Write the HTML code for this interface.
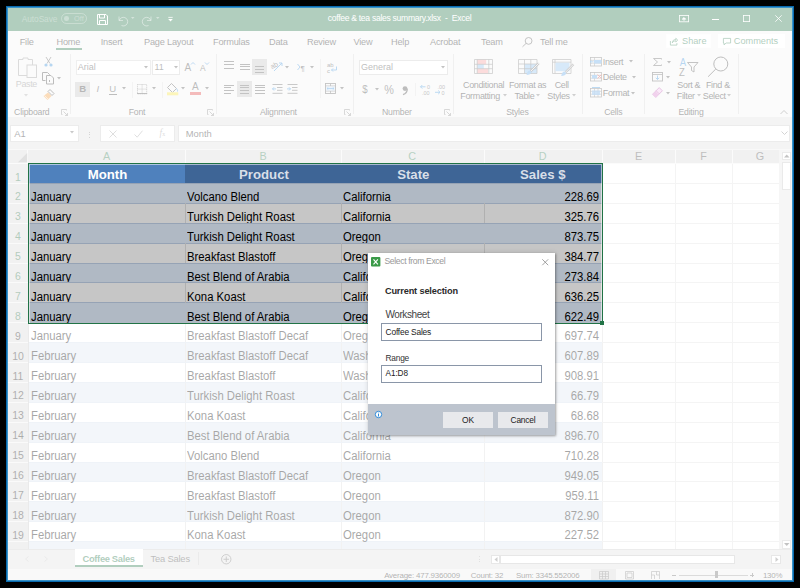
<!DOCTYPE html>
<html><head><meta charset="utf-8">
<style>
*{margin:0;padding:0;box-sizing:border-box}
html,body{width:800px;height:588px;overflow:hidden;background:#000}
body{position:relative;font-family:"Liberation Sans",sans-serif}
.a{position:absolute}
.t{position:absolute;white-space:nowrap;line-height:1}
svg{overflow:visible}
</style></head><body>

<div class="a" style="left:6px;top:6px;width:788px;height:576px;border:1px solid #0a6aae;box-shadow:inset 0 0 0 1px #3a93c8"></div>
<div class="a" style="left:8px;top:8px;width:784px;height:22.6px;background:#217346;"></div>
<div class="t" style="left:21.8px;top:14.99px;font-size:8.4px;color:rgba(255,255,255,.35);font-weight:400;letter-spacing:-0.1px">AutoSave</div>
<div class="a" style="left:60.8px;top:13px;width:26.2px;height:10.7px;border:1px solid rgba(255,255,255,.3);border-radius:6px"></div>
<div class="a" style="left:64px;top:16.3px;width:4.6px;height:4.6px;border-radius:50%;background:rgba(255,255,255,.35)"></div>
<div class="t" style="left:74px;top:15.34px;font-size:7.4px;color:rgba(255,255,255,.35);font-weight:400;">Off</div>
<svg class="a" style="left:97px;top:14px;" width="11" height="11" viewBox="0 0 11 11"><path d="M.5 .5h8.5l1.5 1.5v8.5h-10z M2.5 .5v3.5h5v-3.5 M2.5 10.5v-4h6v4" fill="none" stroke="#fff" stroke-width="1"/></svg>
<svg class="a" style="left:117px;top:14.5px;" width="11" height="11" viewBox="0 0 11 11"><path d="M2 1.5v4h4 M2.3 5.3a4.3 4.3 0 1 1 2.2 5.2" fill="none" stroke="rgba(255,255,255,.45)" stroke-width="1"/></svg>
<svg class="a" style="left:131px;top:17px;" width="4" height="3" viewBox="0 0 4 3"><path d="M0 0h3.5l-1.75 2z" fill="rgba(255,255,255,.45)"/></svg>
<svg class="a" style="left:142px;top:14.5px;" width="11" height="11" viewBox="0 0 11 11"><path d="M9 1.5v4h-4 M8.7 5.3a4.3 4.3 0 1 0 -2.2 5.2" fill="none" stroke="rgba(255,255,255,.45)" stroke-width="1"/></svg>
<svg class="a" style="left:156px;top:17px;" width="4" height="3" viewBox="0 0 4 3"><path d="M0 0h3.5l-1.75 2z" fill="rgba(255,255,255,.45)"/></svg>
<svg class="a" style="left:167.8px;top:17px;" width="5" height="5" viewBox="0 0 5 5"><path d="M.3 .4h4.4" stroke="#fff" stroke-width=".8"/><path d="M.2 2h4.6l-2.3 2.5z" fill="#fff"/></svg>
<div class="t" style="left:269.50px;top:14.32px;width:260px;text-align:center;font-size:8.6px;color:#fff;font-weight:400;letter-spacing:-0.3px">coffee &amp; tea sales summary.xlsx &nbsp;- &nbsp;Excel</div>
<svg class="a" style="left:678.5px;top:15.2px;" width="10" height="7" viewBox="0 0 10 7"><rect x=".4" y=".4" width="9.2" height="6.4" fill="none" stroke="#fff" stroke-width=".8"/><path d="M3.2 4.2l1.8-1.8 1.8 1.8z M5 3.5v2.5" fill="#fff" stroke="#fff" stroke-width=".7"/></svg>
<div class="a" style="left:711.5px;top:18.5px;width:7px;height:0.8px;background:#fff;"></div>
<svg class="a" style="left:743px;top:15.3px;" width="7" height="7" viewBox="0 0 7 7"><rect x=".4" y=".4" width="6.2" height="6.2" fill="none" stroke="#fff" stroke-width=".8"/></svg>
<svg class="a" style="left:774.8px;top:15.3px;" width="7" height="7" viewBox="0 0 7 7"><path d="M.3 .3l6.4 6.4 M6.7 .3l-6.4 6.4" stroke="#fff" stroke-width=".8"/></svg>
<div class="a" style="left:8px;top:30.6px;width:784px;height:86.6px;background:#f3f3f3;"></div>
<div class="t" style="left:19.7px;top:37.81px;font-size:9.2px;color:#1a1a1a;font-weight:400;letter-spacing:-0.2px">File</div>
<div class="t" style="left:56.5px;top:37.81px;font-size:9.2px;color:#1a1a1a;font-weight:400;letter-spacing:-0.2px">Home</div>
<div class="t" style="left:100.7px;top:37.81px;font-size:9.2px;color:#1a1a1a;font-weight:400;letter-spacing:-0.2px">Insert</div>
<div class="t" style="left:144px;top:37.81px;font-size:9.2px;color:#1a1a1a;font-weight:400;letter-spacing:-0.2px">Page Layout</div>
<div class="t" style="left:213px;top:37.81px;font-size:9.2px;color:#1a1a1a;font-weight:400;letter-spacing:-0.2px">Formulas</div>
<div class="t" style="left:269px;top:37.81px;font-size:9.2px;color:#1a1a1a;font-weight:400;letter-spacing:-0.2px">Data</div>
<div class="t" style="left:307px;top:37.81px;font-size:9.2px;color:#1a1a1a;font-weight:400;letter-spacing:-0.2px">Review</div>
<div class="t" style="left:353.5px;top:37.81px;font-size:9.2px;color:#1a1a1a;font-weight:400;letter-spacing:-0.2px">View</div>
<div class="t" style="left:391px;top:37.81px;font-size:9.2px;color:#1a1a1a;font-weight:400;letter-spacing:-0.2px">Help</div>
<div class="t" style="left:430px;top:37.81px;font-size:9.2px;color:#1a1a1a;font-weight:400;letter-spacing:-0.2px">Acrobat</div>
<div class="t" style="left:481px;top:37.81px;font-size:9.2px;color:#1a1a1a;font-weight:400;letter-spacing:-0.2px">Team</div>
<div class="a" style="left:56.2px;top:48.3px;width:26px;height:2px;background:#217346;"></div>
<svg class="a" style="left:521.8px;top:36.5px;" width="10.5" height="10" viewBox="0 0 10.5 10"><circle cx="6.6" cy="3.9" r="3.4" fill="none" stroke="#444" stroke-width=".9"/><path d="M4.2 6.3l-3.7 3.5" stroke="#444" stroke-width=".9"/></svg>
<div class="t" style="left:540px;top:37.81px;font-size:9.2px;color:#1a1a1a;font-weight:400;letter-spacing:-0.2px">Tell me</div>
<div class="a" style="left:666px;top:33.8px;width:45px;height:14.3px;background:#fff;border:1px solid #fbfbfb"></div>
<svg class="a" style="left:670px;top:38px;" width="8" height="7.5" viewBox="0 0 8 7.5"><path d="M.4 3v4.1h6.5v-2 M2.3 4.8c0-2.2 1.6-3.3 3.5-3.3v-1.2l1.9 1.8-1.9 1.8v-1.1c-1.5 0-2.7.7-3.5 2z" fill="none" stroke="#217346" stroke-width=".8"/></svg>
<div class="t" style="left:682px;top:37.01px;font-size:9.2px;color:#217346;font-weight:400;">Share</div>
<div class="a" style="left:717.8px;top:33.8px;width:67.2px;height:14.3px;background:#fff;"></div>
<svg class="a" style="left:723px;top:37.5px;" width="8" height="7" viewBox="0 0 8 7"><path d="M.4 .4h7.2v4.6h-4.4l-2.2 1.8v-1.8h-.6z" fill="none" stroke="#217346" stroke-width=".8"/></svg>
<div class="t" style="left:733.8px;top:37.01px;font-size:9.2px;color:#217346;font-weight:400;">Comments</div>
<div class="a" style="left:69.5px;top:54px;width:1px;height:60px;background:#d4d4d4;"></div>
<div class="a" style="left:216.3px;top:54px;width:1px;height:60px;background:#d4d4d4;"></div>
<div class="a" style="left:352.5px;top:54px;width:1px;height:60px;background:#d4d4d4;"></div>
<div class="a" style="left:453.2px;top:54px;width:1px;height:60px;background:#d4d4d4;"></div>
<div class="a" style="left:581.7px;top:54px;width:1px;height:60px;background:#d4d4d4;"></div>
<div class="a" style="left:644.4px;top:54px;width:1px;height:60px;background:#d4d4d4;"></div>
<div class="a" style="left:738.3px;top:54.4px;width:1px;height:59.6px;background:#d4d4d4;"></div>
<div class="t" style="left:-8.20px;top:108.14px;width:80px;text-align:center;font-size:8.7px;color:#1a1a1a;font-weight:400;letter-spacing:-0.2px">Clipboard</div>
<div class="t" style="left:97.00px;top:108.14px;width:80px;text-align:center;font-size:8.7px;color:#1a1a1a;font-weight:400;letter-spacing:-0.2px">Font</div>
<div class="t" style="left:238.40px;top:108.14px;width:80px;text-align:center;font-size:8.7px;color:#1a1a1a;font-weight:400;letter-spacing:-0.2px">Alignment</div>
<div class="t" style="left:356.90px;top:108.14px;width:80px;text-align:center;font-size:8.7px;color:#1a1a1a;font-weight:400;letter-spacing:-0.2px">Number</div>
<div class="t" style="left:477.40px;top:108.14px;width:80px;text-align:center;font-size:8.7px;color:#1a1a1a;font-weight:400;letter-spacing:-0.2px">Styles</div>
<div class="t" style="left:573.30px;top:108.14px;width:80px;text-align:center;font-size:8.7px;color:#1a1a1a;font-weight:400;letter-spacing:-0.2px">Cells</div>
<div class="t" style="left:651.00px;top:108.14px;width:80px;text-align:center;font-size:8.7px;color:#1a1a1a;font-weight:400;letter-spacing:-0.2px">Editing</div>
<svg class="a" style="left:61px;top:109px;" width="7" height="7" viewBox="0 0 7 7"><path d="M.5 .5h5v1 M.5 .5v5h1 M2.5 2.5l4 4 M6.5 4v2.5h-2.5" fill="none" stroke="#777" stroke-width=".8"/></svg>
<svg class="a" style="left:206.8px;top:109px;" width="7" height="7" viewBox="0 0 7 7"><path d="M.5 .5h5v1 M.5 .5v5h1 M2.5 2.5l4 4 M6.5 4v2.5h-2.5" fill="none" stroke="#777" stroke-width=".8"/></svg>
<svg class="a" style="left:343.5px;top:109px;" width="7" height="7" viewBox="0 0 7 7"><path d="M.5 .5h5v1 M.5 .5v5h1 M2.5 2.5l4 4 M6.5 4v2.5h-2.5" fill="none" stroke="#777" stroke-width=".8"/></svg>
<svg class="a" style="left:444px;top:109px;" width="7" height="7" viewBox="0 0 7 7"><path d="M.5 .5h5v1 M.5 .5v5h1 M2.5 2.5l4 4 M6.5 4v2.5h-2.5" fill="none" stroke="#777" stroke-width=".8"/></svg>
<svg class="a" style="left:18px;top:57px;" width="20" height="21" viewBox="0 0 20 21"><path d="M.5 2.5h4.5v-1.5h5v1.5h4.5v16h-14z" fill="none" stroke="#999"/><rect x="9" y="8" width="9.5" height="12.5" fill="#f3f3f3" stroke="#999"/></svg>
<div class="t" style="left:6.40px;top:80.18px;width:40px;text-align:center;font-size:9px;color:#888;font-weight:400;letter-spacing:-0.35px">Paste</div>
<svg class="a" style="left:23.6px;top:94.0px;" width="4" height="3" viewBox="0 0 4 3"><path d="M0 0h4l-2 2.4z" fill="#aaa"/></svg>
<svg class="a" style="left:44px;top:57px;" width="9" height="10" viewBox="0 0 9 10"><path d="M2 0l4 6.5 M7 0l-4 6.5" stroke="#555" stroke-width=".9"/><circle cx="2" cy="8" r="1.6" fill="#2f8ad8"/><circle cx="7" cy="8" r="1.6" fill="#2f8ad8"/></svg>
<svg class="a" style="left:42px;top:72px;" width="12" height="12" viewBox="0 0 12 12"><path d="M.5 .5h5l2 2v3 M.5 .5v8h3" fill="none" stroke="#444"/><path d="M4.5 3.5h4.5l2.5 2.5v6h-7z" fill="#f3f3f3" stroke="#444"/><path d="M7.5 8v2" stroke="#444"/></svg>
<svg class="a" style="left:57.2px;top:77.0px;" width="4" height="3" viewBox="0 0 4 3"><path d="M0 0h4l-2 2.4z" fill="#555"/></svg>
<svg class="a" style="left:42.5px;top:88.5px;" width="12" height="11" viewBox="0 0 12 11"><path d="M7 0.5l4 4-2 2-4-4z" fill="none" stroke="#444"/><path d="M5 3.5l3.5 3.5-4 4-4-4z" fill="#f39c3a"/><path d="M1.5 6.5l3.5 3.5" stroke="#fff" stroke-width=".6"/></svg>
<div class="a" style="left:75.6px;top:59.9px;width:75.4px;height:15px;background:#fff;border:1px solid #d0d0d0"></div>
<div class="t" style="left:77.8px;top:63.18px;font-size:9px;color:#444;font-weight:400;">Arial</div>
<svg class="a" style="left:144px;top:65.8px;" width="4" height="3" viewBox="0 0 4 3"><path d="M0 0h4l-2 2.4z" fill="#555"/></svg>
<div class="a" style="left:152px;top:59.9px;width:28.3px;height:15px;background:#fff;border:1px solid #c8c8c8"></div>
<div class="t" style="left:154.4px;top:63.18px;font-size:9px;color:#444;font-weight:400;">11</div>
<svg class="a" style="left:173.6px;top:65.8px;" width="4" height="3" viewBox="0 0 4 3"><path d="M0 0h4l-2 2.4z" fill="#555"/></svg>
<div class="t" style="left:184.6px;top:62.83px;font-size:10px;color:#444;font-weight:400;">A</div>
<svg class="a" style="left:190.5px;top:61.5px;" width="4" height="3" viewBox="0 0 4 3"><path d="M0 2.5l2-2 2 2" fill="none" stroke="#2f8ad8" stroke-width=".9"/></svg>
<div class="t" style="left:200px;top:64.19px;font-size:8.4px;color:#444;font-weight:400;">A</div>
<svg class="a" style="left:205.3px;top:62px;" width="4" height="3" viewBox="0 0 4 3"><path d="M0 .5l2 2 2-2" fill="none" stroke="#2f8ad8" stroke-width=".9"/></svg>
<div class="a" style="left:75.3px;top:81.5px;width:15px;height:15.5px;background:#c2c2c2;"></div>
<div class="t" style="left:72.80px;top:84.37px;width:20px;text-align:center;font-size:9.6px;color:#333;font-weight:700;">B</div>
<div class="t" style="left:87.80px;top:84.37px;width:20px;text-align:center;font-size:9.6px;color:#444;font-weight:400;font-style:italic">I</div>
<div class="t" style="left:102.60px;top:84.07px;width:20px;text-align:center;font-size:9.6px;color:#444;font-weight:400;">U</div>
<div class="a" style="left:108.6px;top:94px;width:8px;height:0.9px;background:#444;"></div>
<svg class="a" style="left:122.4px;top:87.3px;" width="4" height="3" viewBox="0 0 4 3"><path d="M0 0h4l-2 2.4z" fill="#555"/></svg>
<div class="a" style="left:131.5px;top:82px;width:1px;height:16px;background:#ddd;"></div>
<svg class="a" style="left:137.2px;top:83.5px;" width="10.2" height="10.2" viewBox="0 0 10.2 10.2"><path d="M.5 .5h9.2v9.2h-9.2z M5.1 .5v9.2 M.5 5.1h9.2" fill="none" stroke="#555" stroke-width=".8" stroke-dasharray="1 1"/><path d="M0 9.6h10.2" stroke="#444" stroke-width="1"/></svg>
<svg class="a" style="left:151.9px;top:87.3px;" width="4" height="3" viewBox="0 0 4 3"><path d="M0 0h4l-2 2.4z" fill="#555"/></svg>
<div class="a" style="left:161.5px;top:82px;width:1px;height:16px;background:#ddd;"></div>
<svg class="a" style="left:166.6px;top:82.5px;" width="11.3" height="12.5" viewBox="0 0 11.3 12.5"><path d="M4.5 .5l5 5-4 4-5-5z" fill="none" stroke="#444" stroke-width=".9"/><path d="M9.5 5.5c1 1.5 1.5 2.5 1 3" stroke="#2f8ad8" fill="none"/><rect x="0" y="9.3" width="11.3" height="3" fill="#f5e33a"/></svg>
<svg class="a" style="left:181.1px;top:87.3px;" width="4" height="3" viewBox="0 0 4 3"><path d="M0 0h4l-2 2.4z" fill="#555"/></svg>
<div class="t" style="left:185.40px;top:82.13px;width:20px;text-align:center;font-size:10px;color:#444;font-weight:400;">A</div>
<div class="a" style="left:190px;top:91.8px;width:10.8px;height:3px;background:#e03c3c;"></div>
<svg class="a" style="left:205px;top:87.3px;" width="4" height="3" viewBox="0 0 4 3"><path d="M0 0h4l-2 2.4z" fill="#555"/></svg>
<div class="a" style="left:224.4px;top:61.4px;width:10px;height:0.9px;background:#555;"></div>
<div class="a" style="left:224.4px;top:64.4px;width:10px;height:0.9px;background:#555;"></div>
<div class="a" style="left:224.4px;top:67.6px;width:10px;height:0.9px;background:#555;"></div>
<div class="a" style="left:239.6px;top:63.6px;width:10px;height:0.9px;background:#555;"></div>
<div class="a" style="left:239.6px;top:66.4px;width:10px;height:0.9px;background:#555;"></div>
<div class="a" style="left:239.6px;top:69.2px;width:10px;height:0.9px;background:#555;"></div>
<div class="a" style="left:252.3px;top:59.4px;width:14.8px;height:15.7px;background:#c2c2c2;"></div>
<div class="a" style="left:254.9px;top:66px;width:9.5px;height:0.9px;background:#555;"></div>
<div class="a" style="left:254.9px;top:69px;width:9.5px;height:0.9px;background:#555;"></div>
<div class="a" style="left:254.9px;top:72.2px;width:9.5px;height:0.9px;background:#555;"></div>
<svg class="a" style="left:271px;top:61.3px;" width="12" height="11" viewBox="0 0 12 11"><text x="0" y="7" font-size="7" fill="#444" font-family="Liberation Sans" transform="rotate(-30 3 6)">ab</text><path d="M3 10l8-8 M8 2h3v3" fill="none" stroke="#2f8ad8" stroke-width=".9"/></svg>
<svg class="a" style="left:284.6px;top:65.8px;" width="4" height="3" viewBox="0 0 4 3"><path d="M0 0h4l-2 2.4z" fill="#555"/></svg>
<svg class="a" style="left:296.5px;top:62.5px;" width="10" height="8" viewBox="0 0 10 8"><path d="M.5 1l2.5 3-2.5 3" fill="none" stroke="#2f8ad8" stroke-width=".9"/><text x="3.5" y="7.5" font-size="8" fill="#444" font-family="Liberation Sans">¶</text></svg>
<svg class="a" style="left:310.3px;top:65.8px;" width="4" height="3" viewBox="0 0 4 3"><path d="M0 0h4l-2 2.4z" fill="#555"/></svg>
<div class="a" style="left:320.2px;top:59px;width:1px;height:39.4px;background:#ddd;"></div>
<svg class="a" style="left:326.5px;top:62px;" width="11" height="11" viewBox="0 0 11 11"><text x="0" y="5" font-size="6" fill="#444" font-family="Liberation Sans">ab</text><text x="0" y="10.5" font-size="6" fill="#444" font-family="Liberation Sans">c</text><path d="M9.5 4.5v3.5h-5 M6 6.5l-1.5 1.5 1.5 1.5" fill="none" stroke="#2f8ad8" stroke-width=".9"/></svg>
<div class="a" style="left:224.4px;top:84.6px;width:10px;height:0.9px;background:#555;"></div>
<div class="a" style="left:224.4px;top:87.4px;width:7px;height:0.9px;background:#555;"></div>
<div class="a" style="left:224.4px;top:90.2px;width:10px;height:0.9px;background:#555;"></div>
<div class="a" style="left:224.4px;top:93px;width:7px;height:0.9px;background:#555;"></div>
<div class="a" style="left:237px;top:81.4px;width:14.9px;height:15.8px;background:#c2c2c2;"></div>
<div class="a" style="left:239.6px;top:84.6px;width:9.7px;height:0.9px;background:#555;"></div>
<div class="a" style="left:239.6px;top:87.4px;width:9.7px;height:0.9px;background:#555;"></div>
<div class="a" style="left:239.6px;top:90.2px;width:9.7px;height:0.9px;background:#555;"></div>
<div class="a" style="left:239.6px;top:93px;width:9.7px;height:0.9px;background:#555;"></div>
<div class="a" style="left:254.9px;top:84.6px;width:9.8px;height:0.9px;background:#555;"></div>
<div class="a" style="left:254.9px;top:87.4px;width:6.8px;height:0.9px;background:#555;"></div>
<div class="a" style="left:254.9px;top:90.2px;width:9.8px;height:0.9px;background:#555;"></div>
<div class="a" style="left:254.9px;top:93px;width:6.8px;height:0.9px;background:#555;"></div>
<div class="a" style="left:257.9px;top:87.4px;width:6.8px;height:0.9px;background:#555;"></div>
<div class="a" style="left:257.9px;top:93px;width:6.8px;height:0.9px;background:#555;"></div>
<svg class="a" style="left:271.5px;top:84px;" width="11" height="10" viewBox="0 0 11 10"><path d="M.5 .5h10 M.5 9.3h10 M5 3.5h5.5 M5 6.3h5.5" stroke="#555" stroke-width=".9"/><path d="M4 4.9h-3.5 M2 3.3l-1.5 1.6 1.5 1.6" fill="none" stroke="#2f8ad8" stroke-width=".9"/></svg>
<svg class="a" style="left:286.8px;top:84px;" width="11" height="10" viewBox="0 0 11 10"><path d="M.5 .5h10 M.5 9.3h10 M5 3.5h5.5 M5 6.3h5.5" stroke="#555" stroke-width=".9"/><path d="M0 4.9h3.5 M2 3.3l1.5 1.6-1.5 1.6" fill="none" stroke="#2f8ad8" stroke-width=".9"/></svg>
<svg class="a" style="left:325px;top:83.2px;" width="11" height="11" viewBox="0 0 11 11"><rect x=".5" y=".5" width="10" height="10" fill="none" stroke="#555" stroke-width=".9"/><path d="M.5 3h10 M.5 8h10 M5.5 .5v2.5 M5.5 8v2.5" stroke="#555" stroke-width=".8"/><rect x="1" y="3.5" width="9" height="4" fill="#cfe3f7"/><path d="M2 5.5h7 M3.3 4.3l-1.3 1.2 1.3 1.2 M7.7 4.3l1.3 1.2-1.3 1.2" fill="none" stroke="#2f8ad8" stroke-width=".8"/></svg>
<svg class="a" style="left:340.1px;top:87.3px;" width="4" height="3" viewBox="0 0 4 3"><path d="M0 0h4l-2 2.4z" fill="#555"/></svg>
<div class="a" style="left:358.5px;top:60px;width:89.2px;height:15.1px;background:#fff;border:1px solid #c8c8c8"></div>
<div class="t" style="left:361px;top:63.08px;font-size:9px;color:#444;font-weight:400;">General</div>
<svg class="a" style="left:440.8px;top:65.8px;" width="4" height="3" viewBox="0 0 4 3"><path d="M0 0h4l-2 2.4z" fill="#555"/></svg>
<div class="t" style="left:355.30px;top:84.07px;width:20px;text-align:center;font-size:11.5px;color:#444;font-weight:400;transform:scaleX(.85)">$</div>
<svg class="a" style="left:375px;top:87.8px;" width="4" height="3" viewBox="0 0 4 3"><path d="M0 0h4l-2 2.4z" fill="#555"/></svg>
<div class="t" style="left:379.00px;top:83.64px;width:20px;text-align:center;font-size:12px;color:#444;font-weight:400;transform:scaleX(.9)">%</div>
<svg class="a" style="left:401.6px;top:86px;" width="6" height="9" viewBox="0 0 6 9"><circle cx="3" cy="2.6" r="2.4" fill="#444"/><path d="M5.3 2.8c0 3-1.5 5-4.3 5.8" fill="none" stroke="#444" stroke-width="1.3"/></svg>
<div class="a" style="left:414.6px;top:83px;width:1px;height:13px;background:#ddd;"></div>
<svg class="a" style="left:419.5px;top:83.5px;" width="11" height="11" viewBox="0 0 11 11"><path d="M5.5 2.8h-5 M2.3 1l-1.8 1.8 1.8 1.8" fill="none" stroke="#2f8ad8" stroke-width=".9"/><text x="7" y="5" font-size="5.5" fill="#555" font-family="Liberation Sans">0</text><text x="2" y="10.5" font-size="5.5" fill="#555" font-family="Liberation Sans">.00</text></svg>
<svg class="a" style="left:434.6px;top:83.5px;" width="11" height="11" viewBox="0 0 11 11"><text x="2.5" y="5" font-size="5.5" fill="#555" font-family="Liberation Sans">.00</text><path d="M0 8.3h5 M3.2 6.5l1.8 1.8-1.8 1.8" fill="none" stroke="#2f8ad8" stroke-width=".9"/><text x="6.5" y="10.5" font-size="5.5" fill="#555" font-family="Liberation Sans">0</text></svg>
<svg class="a" style="left:474px;top:59px;" width="19" height="15" viewBox="0 0 19 15"><rect x="3.2" y=".5" width="9" height="4.8" fill="#f59a9a"/><rect x="3.2" y="5.3" width="6.6" height="4.4" fill="#8cc0ee"/><rect x="3.2" y="9.7" width="10.8" height="4.8" fill="#f59a9a"/><path d="M.5 .5h18v14h-18z M.5 5.3h18 M.5 9.7h18 M3.2 .5v14 M14.8 .5v14" fill="none" stroke="#666" stroke-width=".7"/></svg>
<div class="t" style="left:453.60px;top:80.78px;width:60px;text-align:center;font-size:9px;color:#1a1a1a;font-weight:400;letter-spacing:-0.35px">Conditional</div>
<div class="t" style="left:453.30px;top:91.88px;width:60px;text-align:center;font-size:9px;color:#1a1a1a;font-weight:400;letter-spacing:-0.35px">Formatting &nbsp;&nbsp;</div>
<svg class="a" style="left:517.8px;top:59px;" width="22" height="17" viewBox="0 0 22 17"><rect x="6.5" y="5" width="12.5" height="9.5" fill="#8cc0ee"/><path d="M.5 .5h18.5v14h-18.5z M.5 5h18.5 M.5 9.7h18.5 M6.5 .5v14 M12.8 .5v14" fill="none" stroke="#666" stroke-width=".7"/><path d="M20.8 4.2l-8 8" stroke="#666" stroke-width="2.2"/><path d="M20.8 4.2l-8 8" stroke="#f3f3f3" stroke-width=".9"/><path d="M12 11.5c-2 0-3 2-3.5 4.5 2.5 0 5-1 5-3z" fill="#5ea5e8"/></svg>
<div class="t" style="left:497.60px;top:80.78px;width:60px;text-align:center;font-size:9px;color:#1a1a1a;font-weight:400;letter-spacing:-0.35px">Format as</div>
<div class="t" style="left:497.70px;top:91.88px;width:60px;text-align:center;font-size:9px;color:#1a1a1a;font-weight:400;letter-spacing:-0.35px">Table &nbsp;&nbsp;</div>
<svg class="a" style="left:552.2px;top:59px;" width="23" height="18" viewBox="0 0 23 18"><path d="M.5 .5h18.5v14h-18.5z M.5 3.2h18.5 M3 .5v14" fill="none" stroke="#666" stroke-width=".7"/><rect x="3.5" y="3.7" width="14" height="8.5" fill="#8cc0ee"/><path d="M21.5 5.2l-8 8" stroke="#666" stroke-width="2.2"/><path d="M21.5 5.2l-8 8" stroke="#f3f3f3" stroke-width=".9"/><path d="M12.7 12.5c-2 0-3 2-3.5 4.5 2.5 0 5-1 5-3z" fill="#5ea5e8"/></svg>
<div class="t" style="left:531.70px;top:80.78px;width:60px;text-align:center;font-size:9px;color:#1a1a1a;font-weight:400;letter-spacing:-0.35px">Cell</div>
<div class="t" style="left:531.80px;top:91.88px;width:60px;text-align:center;font-size:9px;color:#1a1a1a;font-weight:400;letter-spacing:-0.35px">Styles &nbsp;&nbsp;</div>
<svg class="a" style="left:589.6px;top:56.9px;" width="12" height="9.5" viewBox="0 0 12 9.5"><rect x=".5" y=".5" width="11" height="8.5" fill="none" stroke="#666" stroke-width=".8"/><path d="M.5 3.3h11 M.5 6.2h11 M4.5 .5v8.5" stroke="#666" stroke-width=".6"/><rect x="4" y="3" width="7.5" height="3.5" fill="#5ea5e8"/><path d="M3.5 4.75h-3.5 M1.5 3.3l-1.5 1.45 1.5 1.45" fill="none" stroke="#2f8ad8" stroke-width=".8"/></svg>
<div class="t" style="left:602.8px;top:57.58px;font-size:9px;color:#1a1a1a;font-weight:400;letter-spacing:-0.35px">Insert</div>
<svg class="a" style="left:629px;top:60.3px;" width="4" height="3" viewBox="0 0 4 3"><path d="M0 0h4l-2 2.4z" fill="#555"/></svg>
<svg class="a" style="left:589.6px;top:72px;" width="12" height="9.5" viewBox="0 0 12 9.5"><rect x=".5" y=".5" width="11" height="8.5" fill="none" stroke="#666" stroke-width=".8"/><path d="M.5 3.3h11 M.5 6.2h11 M4.5 .5v8.5" stroke="#666" stroke-width=".6"/><rect x="2" y="3" width="5" height="3.5" fill="#5ea5e8"/><path d="M7.5 2.5l4 4 M11.5 2.5l-4 4" stroke="#e03c3c" stroke-width=".9"/></svg>
<div class="t" style="left:602.8px;top:73.38px;font-size:9px;color:#1a1a1a;font-weight:400;letter-spacing:-0.35px">Delete</div>
<svg class="a" style="left:632px;top:76.0px;" width="4" height="3" viewBox="0 0 4 3"><path d="M0 0h4l-2 2.4z" fill="#555"/></svg>
<svg class="a" style="left:589.6px;top:87px;" width="12" height="10.5" viewBox="0 0 12 10.5"><rect x=".5" y="1.5" width="11" height="8.5" fill="none" stroke="#666" stroke-width=".8"/><path d="M.5 4.3h11 M.5 7.2h11 M4.5 1.5v8.5 M8 1.5v8.5" stroke="#666" stroke-width=".6"/><rect x="2" y="3.5" width="8" height="4.5" fill="#5ea5e8" opacity=".8"/><path d="M2 .5h8" stroke="#2f8ad8" stroke-width=".9"/></svg>
<div class="t" style="left:602.8px;top:88.78px;font-size:9px;color:#1a1a1a;font-weight:400;letter-spacing:-0.35px">Format</div>
<svg class="a" style="left:630.5px;top:91.6px;" width="4" height="3" viewBox="0 0 4 3"><path d="M0 0h4l-2 2.4z" fill="#555"/></svg>
<svg class="a" style="left:653.2px;top:58.1px;" width="9" height="8" viewBox="0 0 9 8"><path d="M8.5 1.5v-1h-8l4 3.5-4 3.5h8v-1" fill="none" stroke="#555" stroke-width=".9"/></svg>
<svg class="a" style="left:667px;top:60.8px;" width="4" height="3" viewBox="0 0 4 3"><path d="M0 0h4l-2 2.4z" fill="#555"/></svg>
<svg class="a" style="left:651.8px;top:72.1px;" width="11" height="9.5" viewBox="0 0 11 9.5"><rect x=".5" y=".5" width="10" height="8.5" fill="none" stroke="#555" stroke-width=".9"/><path d="M.5 2.5h10" stroke="#555" stroke-width=".8"/><path d="M5.5 3.5v4 M3.8 5.8l1.7 1.7 1.7-1.7" fill="none" stroke="#2f8ad8" stroke-width=".9"/></svg>
<svg class="a" style="left:665.6px;top:76.1px;" width="4" height="3" viewBox="0 0 4 3"><path d="M0 0h4l-2 2.4z" fill="#555"/></svg>
<svg class="a" style="left:651.8px;top:87px;" width="11" height="11" viewBox="0 0 11 11"><path d="M7.2 .6l3.2 3.2-6.6 6.6-3.2-3.2z" fill="#f4c4ee" stroke="#b04aa6" stroke-width=".9"/><path d="M4.1 3.7l3.2 3.2" stroke="#b04aa6" stroke-width=".9"/><path d="M.6 7.2l3.2 3.2 2.9-2.9-3.2-3.2z" fill="#d77ccc"/></svg>
<svg class="a" style="left:665.6px;top:91.8px;" width="4" height="3" viewBox="0 0 4 3"><path d="M0 0h4l-2 2.4z" fill="#555"/></svg>
<div class="t" style="left:676.50px;top:56.83px;width:12px;text-align:center;font-size:10.6px;color:#2f8ad8;font-weight:400;transform:scaleX(.9)">A</div>
<div class="t" style="left:676.30px;top:66.63px;width:12px;text-align:center;font-size:10.6px;color:#444;font-weight:400;transform:scaleX(.9)">Z</div>
<svg class="a" style="left:686.8px;top:61.6px;" width="11.5" height="10.5" viewBox="0 0 11.5 10.5"><path d="M.5 .5h10.5l-4 4.5v5l-2.5-1.5v-3.5z" fill="none" stroke="#444" stroke-width=".9"/></svg>
<div class="t" style="left:663.80px;top:80.88px;width:50px;text-align:center;font-size:9px;color:#1a1a1a;font-weight:400;letter-spacing:-0.35px">Sort &amp;</div>
<div class="t" style="left:664.00px;top:91.88px;width:50px;text-align:center;font-size:9px;color:#1a1a1a;font-weight:400;letter-spacing:-0.35px">Filter &nbsp;&nbsp;</div>
<svg class="a" style="left:706.5px;top:56px;" width="22" height="22" viewBox="0 0 22 22"><circle cx="13.8" cy="8" r="7" fill="none" stroke="#444" stroke-width="1"/><path d="M8.8 13l-7.7 7.7" stroke="#444" stroke-width="1"/></svg>
<div class="t" style="left:692.90px;top:80.58px;width:50px;text-align:center;font-size:9px;color:#1a1a1a;font-weight:400;letter-spacing:-0.35px">Find &amp;</div>
<div class="t" style="left:692.50px;top:91.88px;width:50px;text-align:center;font-size:9px;color:#1a1a1a;font-weight:400;letter-spacing:-0.35px">Select &nbsp;&nbsp;</div>
<svg class="a" style="left:779.5px;top:109.5px;" width="8" height="5" viewBox="0 0 8 5"><path d="M.5 4l3.5-3.5 3.5 3.5" fill="none" stroke="#666" stroke-width=".9"/></svg>
<svg class="a" style="left:502.6px;top:94.39999999999999px;" width="4" height="3" viewBox="0 0 4 3"><path d="M0 0h4l-2 2.4z" fill="#777"/></svg>
<svg class="a" style="left:535.6px;top:94.39999999999999px;" width="4" height="3" viewBox="0 0 4 3"><path d="M0 0h4l-2 2.4z" fill="#777"/></svg>
<svg class="a" style="left:571.5px;top:94.39999999999999px;" width="4" height="3" viewBox="0 0 4 3"><path d="M0 0h4l-2 2.4z" fill="#777"/></svg>
<svg class="a" style="left:696.6px;top:94.39999999999999px;" width="4" height="3" viewBox="0 0 4 3"><path d="M0 0h4l-2 2.4z" fill="#777"/></svg>
<svg class="a" style="left:727.4px;top:94.39999999999999px;" width="4" height="3" viewBox="0 0 4 3"><path d="M0 0h4l-2 2.4z" fill="#777"/></svg>
<div class="a" style="left:8px;top:117.2px;width:784px;height:32.5px;background:#e0e0e0;"></div>
<div class="a" style="left:9.65px;top:124.9px;width:69.6px;height:17.6px;background:#fff;border:1px solid #c8c8c8"></div>
<div class="t" style="left:14.2px;top:129.04px;font-size:9.4px;color:#222;font-weight:400;">A1</div>
<svg class="a" style="left:70px;top:131.4px;" width="4" height="3" viewBox="0 0 4 3"><path d="M0 0h4l-2 2.4z" fill="#666"/></svg>
<div class="a" style="left:89.4px;top:131.5px;width:1px;height:1px;background:#888;"></div>
<div class="a" style="left:89.4px;top:134px;width:1px;height:1px;background:#888;"></div>
<div class="a" style="left:89.4px;top:136.5px;width:1px;height:1px;background:#888;"></div>
<div class="a" style="left:100.3px;top:125px;width:74.9px;height:17px;background:#fff;border:1px solid #c8c8c8"></div>
<svg class="a" style="left:109px;top:129.5px;" width="8" height="8" viewBox="0 0 8 8"><path d="M.5 .5l7 7 M7.5 .5l-7 7" stroke="#999" stroke-width=".9"/></svg>
<svg class="a" style="left:133.5px;top:129.5px;" width="9" height="8" viewBox="0 0 9 8"><path d="M.5 4.5l2.7 2.7 5.3-6.5" fill="none" stroke="#999" stroke-width=".9"/></svg>
<div class="t" style="left:152.40px;top:129.04px;width:20px;text-align:center;font-size:9.4px;color:#999;font-weight:400;font-family:\"Liberation Serif\",serif"><i>f</i><span style="font-size:6px">x</span></div>
<div class="a" style="left:177.7px;top:125px;width:612.5px;height:17px;background:#fff;border:1px solid #c8c8c8"></div>
<div class="t" style="left:185.7px;top:129.04px;font-size:9.4px;color:#222;font-weight:400;">Month</div>
<svg class="a" style="left:780.5px;top:131px;" width="7" height="4" viewBox="0 0 7 4"><path d="M.5 .5l3 3 3-3" fill="none" stroke="#777" stroke-width=".9"/></svg>
<div class="a" style="left:8px;top:149px;width:784px;height:15px;background:#d6d6d6;"></div>
<div class="a" style="left:8px;top:148.5px;width:784px;height:1px;background:#eeeeee;"></div>
<div class="a" style="left:8px;top:149.5px;width:20px;height:400px;background:#d6d6d6;"></div>
<div class="a" style="left:779.3px;top:149.5px;width:12.7px;height:400px;background:#e6e6e6;"></div>
<div class="a" style="left:28px;top:164px;width:751.3px;height:385px;background:#fff;"></div>
<div class="a" style="left:28.5px;top:183.45000000000002px;width:573.5px;height:19.9px;background:#dce6f1;"></div>
<div class="a" style="left:28.5px;top:223.25px;width:573.5px;height:19.9px;background:#dce6f1;"></div>
<div class="a" style="left:28.5px;top:263.05px;width:573.5px;height:19.9px;background:#dce6f1;"></div>
<div class="a" style="left:28.5px;top:302.85px;width:573.5px;height:19.9px;background:#dce6f1;"></div>
<div class="a" style="left:28.5px;top:342.65px;width:573.5px;height:19.9px;background:#dce6f1;"></div>
<div class="a" style="left:28.5px;top:382.45px;width:573.5px;height:19.9px;background:#dce6f1;"></div>
<div class="a" style="left:28.5px;top:422.25px;width:573.5px;height:19.9px;background:#dce6f1;"></div>
<div class="a" style="left:28.5px;top:462.05px;width:573.5px;height:19.9px;background:#dce6f1;"></div>
<div class="a" style="left:28.5px;top:501.84999999999997px;width:573.5px;height:19.9px;background:#dce6f1;"></div>
<div class="a" style="left:28.5px;top:541.65px;width:573.5px;height:19.9px;background:#dce6f1;"></div>
<div class="a" style="left:185px;top:149.5px;width:1px;height:14.5px;background:#f4f4f4;"></div>
<div class="a" style="left:185px;top:164px;width:1px;height:385px;background:#dadada;"></div>
<div class="a" style="left:341px;top:149.5px;width:1px;height:14.5px;background:#f4f4f4;"></div>
<div class="a" style="left:341px;top:164px;width:1px;height:385px;background:#dadada;"></div>
<div class="a" style="left:483.5px;top:149.5px;width:1px;height:14.5px;background:#f4f4f4;"></div>
<div class="a" style="left:483.5px;top:164px;width:1px;height:385px;background:#dadada;"></div>
<div class="a" style="left:602px;top:149.5px;width:1px;height:14.5px;background:#f4f4f4;"></div>
<div class="a" style="left:602px;top:164px;width:1px;height:385px;background:#dadada;"></div>
<div class="a" style="left:675px;top:149.5px;width:1px;height:14.5px;background:#f4f4f4;"></div>
<div class="a" style="left:675px;top:164px;width:1px;height:385px;background:#e0e0e0;"></div>
<div class="a" style="left:732px;top:149.5px;width:1px;height:14.5px;background:#f4f4f4;"></div>
<div class="a" style="left:732px;top:164px;width:1px;height:385px;background:#e0e0e0;"></div>
<div class="a" style="left:8px;top:163.05px;width:20px;height:1px;background:#f0f0f0;"></div>
<div class="a" style="left:28px;top:163.05px;width:574px;height:1px;background:#d0dcea;"></div>
<div class="a" style="left:602px;top:163.05px;width:177.3px;height:1px;background:#e0e0e0;"></div>
<div class="a" style="left:8px;top:182.95000000000002px;width:20px;height:1px;background:#f0f0f0;"></div>
<div class="a" style="left:28px;top:182.95000000000002px;width:574px;height:1px;background:#d0dcea;"></div>
<div class="a" style="left:602px;top:182.95000000000002px;width:177.3px;height:1px;background:#e0e0e0;"></div>
<div class="a" style="left:8px;top:202.85000000000002px;width:20px;height:1px;background:#f0f0f0;"></div>
<div class="a" style="left:28px;top:202.85000000000002px;width:574px;height:1px;background:#d0dcea;"></div>
<div class="a" style="left:602px;top:202.85000000000002px;width:177.3px;height:1px;background:#e0e0e0;"></div>
<div class="a" style="left:8px;top:222.75px;width:20px;height:1px;background:#f0f0f0;"></div>
<div class="a" style="left:28px;top:222.75px;width:574px;height:1px;background:#d0dcea;"></div>
<div class="a" style="left:602px;top:222.75px;width:177.3px;height:1px;background:#e0e0e0;"></div>
<div class="a" style="left:8px;top:242.65px;width:20px;height:1px;background:#f0f0f0;"></div>
<div class="a" style="left:28px;top:242.65px;width:574px;height:1px;background:#d0dcea;"></div>
<div class="a" style="left:602px;top:242.65px;width:177.3px;height:1px;background:#e0e0e0;"></div>
<div class="a" style="left:8px;top:262.55px;width:20px;height:1px;background:#f0f0f0;"></div>
<div class="a" style="left:28px;top:262.55px;width:574px;height:1px;background:#d0dcea;"></div>
<div class="a" style="left:602px;top:262.55px;width:177.3px;height:1px;background:#e0e0e0;"></div>
<div class="a" style="left:8px;top:282.45px;width:20px;height:1px;background:#f0f0f0;"></div>
<div class="a" style="left:28px;top:282.45px;width:574px;height:1px;background:#d0dcea;"></div>
<div class="a" style="left:602px;top:282.45px;width:177.3px;height:1px;background:#e0e0e0;"></div>
<div class="a" style="left:8px;top:302.35px;width:20px;height:1px;background:#f0f0f0;"></div>
<div class="a" style="left:28px;top:302.35px;width:574px;height:1px;background:#d0dcea;"></div>
<div class="a" style="left:602px;top:302.35px;width:177.3px;height:1px;background:#e0e0e0;"></div>
<div class="a" style="left:8px;top:322.25px;width:20px;height:1px;background:#f0f0f0;"></div>
<div class="a" style="left:28px;top:322.25px;width:574px;height:1px;background:#d0dcea;"></div>
<div class="a" style="left:602px;top:322.25px;width:177.3px;height:1px;background:#e0e0e0;"></div>
<div class="a" style="left:8px;top:342.15px;width:20px;height:1px;background:#f0f0f0;"></div>
<div class="a" style="left:28px;top:342.15px;width:574px;height:1px;background:#d0dcea;"></div>
<div class="a" style="left:602px;top:342.15px;width:177.3px;height:1px;background:#e0e0e0;"></div>
<div class="a" style="left:8px;top:362.05px;width:20px;height:1px;background:#f0f0f0;"></div>
<div class="a" style="left:28px;top:362.05px;width:574px;height:1px;background:#d0dcea;"></div>
<div class="a" style="left:602px;top:362.05px;width:177.3px;height:1px;background:#e0e0e0;"></div>
<div class="a" style="left:8px;top:381.95px;width:20px;height:1px;background:#f0f0f0;"></div>
<div class="a" style="left:28px;top:381.95px;width:574px;height:1px;background:#d0dcea;"></div>
<div class="a" style="left:602px;top:381.95px;width:177.3px;height:1px;background:#e0e0e0;"></div>
<div class="a" style="left:8px;top:401.85px;width:20px;height:1px;background:#f0f0f0;"></div>
<div class="a" style="left:28px;top:401.85px;width:574px;height:1px;background:#d0dcea;"></div>
<div class="a" style="left:602px;top:401.85px;width:177.3px;height:1px;background:#e0e0e0;"></div>
<div class="a" style="left:8px;top:421.75px;width:20px;height:1px;background:#f0f0f0;"></div>
<div class="a" style="left:28px;top:421.75px;width:574px;height:1px;background:#d0dcea;"></div>
<div class="a" style="left:602px;top:421.75px;width:177.3px;height:1px;background:#e0e0e0;"></div>
<div class="a" style="left:8px;top:441.65px;width:20px;height:1px;background:#f0f0f0;"></div>
<div class="a" style="left:28px;top:441.65px;width:574px;height:1px;background:#d0dcea;"></div>
<div class="a" style="left:602px;top:441.65px;width:177.3px;height:1px;background:#e0e0e0;"></div>
<div class="a" style="left:8px;top:461.55px;width:20px;height:1px;background:#f0f0f0;"></div>
<div class="a" style="left:28px;top:461.55px;width:574px;height:1px;background:#d0dcea;"></div>
<div class="a" style="left:602px;top:461.55px;width:177.3px;height:1px;background:#e0e0e0;"></div>
<div class="a" style="left:8px;top:481.45px;width:20px;height:1px;background:#f0f0f0;"></div>
<div class="a" style="left:28px;top:481.45px;width:574px;height:1px;background:#d0dcea;"></div>
<div class="a" style="left:602px;top:481.45px;width:177.3px;height:1px;background:#e0e0e0;"></div>
<div class="a" style="left:8px;top:501.34999999999997px;width:20px;height:1px;background:#f0f0f0;"></div>
<div class="a" style="left:28px;top:501.34999999999997px;width:574px;height:1px;background:#d0dcea;"></div>
<div class="a" style="left:602px;top:501.34999999999997px;width:177.3px;height:1px;background:#e0e0e0;"></div>
<div class="a" style="left:8px;top:521.25px;width:20px;height:1px;background:#f0f0f0;"></div>
<div class="a" style="left:28px;top:521.25px;width:574px;height:1px;background:#d0dcea;"></div>
<div class="a" style="left:602px;top:521.25px;width:177.3px;height:1px;background:#e0e0e0;"></div>
<div class="a" style="left:8px;top:541.15px;width:20px;height:1px;background:#f0f0f0;"></div>
<div class="a" style="left:28px;top:541.15px;width:574px;height:1px;background:#d0dcea;"></div>
<div class="a" style="left:602px;top:541.15px;width:177.3px;height:1px;background:#e0e0e0;"></div>
<div class="a" style="left:8px;top:561.05px;width:20px;height:1px;background:#f0f0f0;"></div>
<div class="a" style="left:28px;top:561.05px;width:574px;height:1px;background:#d0dcea;"></div>
<div class="a" style="left:602px;top:561.05px;width:177.3px;height:1px;background:#e0e0e0;"></div>
<div class="a" style="left:27.3px;top:149.5px;width:1px;height:14px;background:#f4f4f4;"></div>
<div class="a" style="left:27.5px;top:163.5px;width:1px;height:386px;background:#c4c4c4;"></div>
<div class="a" style="left:8px;top:162.7px;width:771.3px;height:1px;background:#f4f4f4;"></div>
<svg class="a" style="left:17.6px;top:152.6px;" width="9.2" height="9.2" viewBox="0 0 9.2 9.2"><path d="M9.2 0v9.2h-9.2z" fill="#a8a8a8"/></svg>
<div class="t" style="left:86.50px;top:151.46px;width:40px;text-align:center;font-size:10.8px;color:#2f7a50;font-weight:400;">A</div>
<div class="t" style="left:243.00px;top:151.46px;width:40px;text-align:center;font-size:10.8px;color:#2f7a50;font-weight:400;">B</div>
<div class="t" style="left:392.25px;top:151.46px;width:40px;text-align:center;font-size:10.8px;color:#2f7a50;font-weight:400;">C</div>
<div class="t" style="left:522.75px;top:151.46px;width:40px;text-align:center;font-size:10.8px;color:#2f7a50;font-weight:400;">D</div>
<div class="t" style="left:618.50px;top:151.46px;width:40px;text-align:center;font-size:10.8px;color:#444;font-weight:400;">E</div>
<div class="t" style="left:683.50px;top:151.46px;width:40px;text-align:center;font-size:10.8px;color:#444;font-weight:400;">F</div>
<div class="t" style="left:740.00px;top:151.46px;width:40px;text-align:center;font-size:10.8px;color:#444;font-weight:400;">G</div>
<div class="t" style="left:6.00px;top:171.54px;width:24px;text-align:center;font-size:11px;color:#1e6b40;font-weight:400;transform:scaleX(.95)">1</div>
<div class="t" style="left:6.00px;top:191.44px;width:24px;text-align:center;font-size:11px;color:#1e6b40;font-weight:400;transform:scaleX(.95)">2</div>
<div class="t" style="left:6.00px;top:211.34px;width:24px;text-align:center;font-size:11px;color:#1e6b40;font-weight:400;transform:scaleX(.95)">3</div>
<div class="t" style="left:6.00px;top:231.24px;width:24px;text-align:center;font-size:11px;color:#1e6b40;font-weight:400;transform:scaleX(.95)">4</div>
<div class="t" style="left:6.00px;top:251.14px;width:24px;text-align:center;font-size:11px;color:#1e6b40;font-weight:400;transform:scaleX(.95)">5</div>
<div class="t" style="left:6.00px;top:271.04px;width:24px;text-align:center;font-size:11px;color:#1e6b40;font-weight:400;transform:scaleX(.95)">6</div>
<div class="t" style="left:6.00px;top:290.94px;width:24px;text-align:center;font-size:11px;color:#1e6b40;font-weight:400;transform:scaleX(.95)">7</div>
<div class="t" style="left:6.00px;top:310.84px;width:24px;text-align:center;font-size:11px;color:#1e6b40;font-weight:400;transform:scaleX(.95)">8</div>
<div class="t" style="left:6.00px;top:330.74px;width:24px;text-align:center;font-size:11px;color:#111;font-weight:400;transform:scaleX(.95)">9</div>
<div class="t" style="left:6.00px;top:350.64px;width:24px;text-align:center;font-size:11px;color:#111;font-weight:400;transform:scaleX(.95)">10</div>
<div class="t" style="left:6.00px;top:370.54px;width:24px;text-align:center;font-size:11px;color:#111;font-weight:400;transform:scaleX(.95)">11</div>
<div class="t" style="left:6.00px;top:390.44px;width:24px;text-align:center;font-size:11px;color:#111;font-weight:400;transform:scaleX(.95)">12</div>
<div class="t" style="left:6.00px;top:410.34px;width:24px;text-align:center;font-size:11px;color:#111;font-weight:400;transform:scaleX(.95)">13</div>
<div class="t" style="left:6.00px;top:430.24px;width:24px;text-align:center;font-size:11px;color:#111;font-weight:400;transform:scaleX(.95)">14</div>
<div class="t" style="left:6.00px;top:450.14px;width:24px;text-align:center;font-size:11px;color:#111;font-weight:400;transform:scaleX(.95)">15</div>
<div class="t" style="left:6.00px;top:470.04px;width:24px;text-align:center;font-size:11px;color:#111;font-weight:400;transform:scaleX(.95)">16</div>
<div class="t" style="left:6.00px;top:489.94px;width:24px;text-align:center;font-size:11px;color:#111;font-weight:400;transform:scaleX(.95)">17</div>
<div class="t" style="left:6.00px;top:509.84px;width:24px;text-align:center;font-size:11px;color:#111;font-weight:400;transform:scaleX(.95)">18</div>
<div class="t" style="left:6.00px;top:529.74px;width:24px;text-align:center;font-size:11px;color:#111;font-weight:400;transform:scaleX(.95)">19</div>
<div class="t" style="left:31.4px;top:330.44px;font-size:12.3px;color:#000;font-weight:400;transform:scaleX(.92);transform-origin:0 0">January</div>
<div class="t" style="left:187px;top:330.44px;font-size:12.3px;color:#000;font-weight:400;transform:scaleX(.92);transform-origin:0 0">Breakfast Blastoff Decaf</div>
<div class="t" style="left:343px;top:330.44px;font-size:12.3px;color:#000;font-weight:400;transform:scaleX(.92);transform-origin:0 0">Oregon</div>
<div class="t" style="left:299px;top:330.44px;width:300px;text-align:right;font-size:12.3px;color:#000;font-weight:400;transform:scaleX(.92);transform-origin:100% 0">697.74</div>
<div class="t" style="left:31.4px;top:350.34px;font-size:12.3px;color:#000;font-weight:400;transform:scaleX(.92);transform-origin:0 0">February</div>
<div class="t" style="left:187px;top:350.34px;font-size:12.3px;color:#000;font-weight:400;transform:scaleX(.92);transform-origin:0 0">Breakfast Blastoff Decaf</div>
<div class="t" style="left:343px;top:350.34px;font-size:12.3px;color:#000;font-weight:400;transform:scaleX(.92);transform-origin:0 0">Washington</div>
<div class="t" style="left:299px;top:350.34px;width:300px;text-align:right;font-size:12.3px;color:#000;font-weight:400;transform:scaleX(.92);transform-origin:100% 0">607.89</div>
<div class="t" style="left:31.4px;top:370.24px;font-size:12.3px;color:#000;font-weight:400;transform:scaleX(.92);transform-origin:0 0">February</div>
<div class="t" style="left:187px;top:370.24px;font-size:12.3px;color:#000;font-weight:400;transform:scaleX(.92);transform-origin:0 0">Breakfast Blastoff</div>
<div class="t" style="left:343px;top:370.24px;font-size:12.3px;color:#000;font-weight:400;transform:scaleX(.92);transform-origin:0 0">Washington</div>
<div class="t" style="left:299px;top:370.24px;width:300px;text-align:right;font-size:12.3px;color:#000;font-weight:400;transform:scaleX(.92);transform-origin:100% 0">908.91</div>
<div class="t" style="left:31.4px;top:390.14px;font-size:12.3px;color:#000;font-weight:400;transform:scaleX(.92);transform-origin:0 0">February</div>
<div class="t" style="left:187px;top:390.14px;font-size:12.3px;color:#000;font-weight:400;transform:scaleX(.92);transform-origin:0 0">Turkish Delight Roast</div>
<div class="t" style="left:343px;top:390.14px;font-size:12.3px;color:#000;font-weight:400;transform:scaleX(.92);transform-origin:0 0">California</div>
<div class="t" style="left:299px;top:390.14px;width:300px;text-align:right;font-size:12.3px;color:#000;font-weight:400;transform:scaleX(.92);transform-origin:100% 0">66.79</div>
<div class="t" style="left:31.4px;top:410.04px;font-size:12.3px;color:#000;font-weight:400;transform:scaleX(.92);transform-origin:0 0">February</div>
<div class="t" style="left:187px;top:410.04px;font-size:12.3px;color:#000;font-weight:400;transform:scaleX(.92);transform-origin:0 0">Kona Koast</div>
<div class="t" style="left:343px;top:410.04px;font-size:12.3px;color:#000;font-weight:400;transform:scaleX(.92);transform-origin:0 0">California</div>
<div class="t" style="left:299px;top:410.04px;width:300px;text-align:right;font-size:12.3px;color:#000;font-weight:400;transform:scaleX(.92);transform-origin:100% 0">68.68</div>
<div class="t" style="left:31.4px;top:429.94px;font-size:12.3px;color:#000;font-weight:400;transform:scaleX(.92);transform-origin:0 0">February</div>
<div class="t" style="left:187px;top:429.94px;font-size:12.3px;color:#000;font-weight:400;transform:scaleX(.92);transform-origin:0 0">Best Blend of Arabia</div>
<div class="t" style="left:343px;top:429.94px;font-size:12.3px;color:#000;font-weight:400;transform:scaleX(.92);transform-origin:0 0">California</div>
<div class="t" style="left:299px;top:429.94px;width:300px;text-align:right;font-size:12.3px;color:#000;font-weight:400;transform:scaleX(.92);transform-origin:100% 0">896.70</div>
<div class="t" style="left:31.4px;top:449.84px;font-size:12.3px;color:#000;font-weight:400;transform:scaleX(.92);transform-origin:0 0">February</div>
<div class="t" style="left:187px;top:449.84px;font-size:12.3px;color:#000;font-weight:400;transform:scaleX(.92);transform-origin:0 0">Volcano Blend</div>
<div class="t" style="left:343px;top:449.84px;font-size:12.3px;color:#000;font-weight:400;transform:scaleX(.92);transform-origin:0 0">California</div>
<div class="t" style="left:299px;top:449.84px;width:300px;text-align:right;font-size:12.3px;color:#000;font-weight:400;transform:scaleX(.92);transform-origin:100% 0">710.28</div>
<div class="t" style="left:31.4px;top:469.74px;font-size:12.3px;color:#000;font-weight:400;transform:scaleX(.92);transform-origin:0 0">February</div>
<div class="t" style="left:187px;top:469.74px;font-size:12.3px;color:#000;font-weight:400;transform:scaleX(.92);transform-origin:0 0">Breakfast Blastoff Decaf</div>
<div class="t" style="left:343px;top:469.74px;font-size:12.3px;color:#000;font-weight:400;transform:scaleX(.92);transform-origin:0 0">Oregon</div>
<div class="t" style="left:299px;top:469.74px;width:300px;text-align:right;font-size:12.3px;color:#000;font-weight:400;transform:scaleX(.92);transform-origin:100% 0">949.05</div>
<div class="t" style="left:31.4px;top:489.64px;font-size:12.3px;color:#000;font-weight:400;transform:scaleX(.92);transform-origin:0 0">February</div>
<div class="t" style="left:187px;top:489.64px;font-size:12.3px;color:#000;font-weight:400;transform:scaleX(.92);transform-origin:0 0">Breakfast Blastoff</div>
<div class="t" style="left:343px;top:489.64px;font-size:12.3px;color:#000;font-weight:400;transform:scaleX(.92);transform-origin:0 0">Oregon</div>
<div class="t" style="left:299px;top:489.64px;width:300px;text-align:right;font-size:12.3px;color:#000;font-weight:400;transform:scaleX(.92);transform-origin:100% 0">959.11</div>
<div class="t" style="left:31.4px;top:509.54px;font-size:12.3px;color:#000;font-weight:400;transform:scaleX(.92);transform-origin:0 0">February</div>
<div class="t" style="left:187px;top:509.54px;font-size:12.3px;color:#000;font-weight:400;transform:scaleX(.92);transform-origin:0 0">Turkish Delight Roast</div>
<div class="t" style="left:343px;top:509.54px;font-size:12.3px;color:#000;font-weight:400;transform:scaleX(.92);transform-origin:0 0">Oregon</div>
<div class="t" style="left:299px;top:509.54px;width:300px;text-align:right;font-size:12.3px;color:#000;font-weight:400;transform:scaleX(.92);transform-origin:100% 0">872.90</div>
<div class="t" style="left:31.4px;top:529.44px;font-size:12.3px;color:#000;font-weight:400;transform:scaleX(.92);transform-origin:0 0">February</div>
<div class="t" style="left:187px;top:529.44px;font-size:12.3px;color:#000;font-weight:400;transform:scaleX(.92);transform-origin:0 0">Kona Koast</div>
<div class="t" style="left:343px;top:529.44px;font-size:12.3px;color:#000;font-weight:400;transform:scaleX(.92);transform-origin:0 0">Oregon</div>
<div class="t" style="left:299px;top:529.44px;width:300px;text-align:right;font-size:12.3px;color:#000;font-weight:400;transform:scaleX(.92);transform-origin:100% 0">227.52</div>
<div class="a" style="left:8px;top:548.7px;width:784px;height:20.7px;background:#e0e0e0;"></div>
<div class="a" style="left:8px;top:548.9px;width:784px;height:1px;background:#c8c8c8;"></div>
<div class="a" style="left:74.75px;top:548.7px;width:68px;height:17.8px;background:#fff;"></div>
<div class="a" style="left:74.75px;top:565.4px;width:68px;height:1.2px;background:#217346;"></div>
<div class="t" style="left:68.60px;top:553.94px;width:80px;text-align:center;font-size:9.4px;color:#217346;font-weight:700;letter-spacing:-0.35px">Coffee Sales</div>
<div class="t" style="left:140.20px;top:553.94px;width:60px;text-align:center;font-size:9.4px;color:#444;font-weight:400;letter-spacing:-0.2px">Tea Sales</div>
<div class="a" style="left:197.8px;top:552px;width:1px;height:13px;background:#c6c6c6;"></div>
<svg class="a" style="left:221px;top:554px;" width="10.5" height="10.5" viewBox="0 0 10.5 10.5"><circle cx="5.25" cy="5.25" r="4.7" fill="none" stroke="#666" stroke-width=".9"/><path d="M5.25 2.5v5.5 M2.5 5.25h5.5" stroke="#666" stroke-width=".9"/></svg>
<svg class="a" style="left:24.5px;top:556px;" width="4" height="6" viewBox="0 0 4 6"><path d="M3.5 .5l-3 2.5 3 2.5" fill="none" stroke="#bbb" stroke-width=".8"/></svg>
<svg class="a" style="left:43.5px;top:556px;" width="4" height="6" viewBox="0 0 4 6"><path d="M.5 .5l3 2.5-3 2.5" fill="none" stroke="#bbb" stroke-width=".8"/></svg>
<div class="a" style="left:478.8px;top:556px;width:1px;height:1px;background:#aaa;"></div>
<div class="a" style="left:478.8px;top:558.5px;width:1px;height:1px;background:#aaa;"></div>
<div class="a" style="left:478.8px;top:561px;width:1px;height:1px;background:#aaa;"></div>
<div class="a" style="left:490.6px;top:554.6px;width:9.7px;height:9.7px;background:#fff;border:1px solid #bbb"></div>
<svg class="a" style="left:493.5px;top:557px;" width="4" height="5" viewBox="0 0 4 5"><path d="M3.5 0v5l-3-2.5z" fill="#777"/></svg>
<div class="a" style="left:500.3px;top:554.6px;width:235.1px;height:9.7px;background:#fff;border:1px solid #bbb"></div>
<div class="a" style="left:771px;top:554.6px;width:9.8px;height:9.7px;background:#fff;border:1px solid #bbb"></div>
<svg class="a" style="left:774.5px;top:557px;" width="4" height="5" viewBox="0 0 4 5"><path d="M0.5 0v5l3-2.5z" fill="#777"/></svg>
<div class="a" style="left:781.7px;top:151.6px;width:9.4px;height:8.5px;background:#fff;border:1px solid #c4c4c4"></div>
<svg class="a" style="left:783.7px;top:154px;" width="5.5" height="3.5" viewBox="0 0 5.5 3.5"><path d="M0 3.5l2.75-3 2.75 3z" fill="#555"/></svg>
<div class="a" style="left:781.7px;top:161.8px;width:9.4px;height:28.1px;background:#fff;border:1px solid #c4c4c4"></div>
<div class="a" style="left:781.7px;top:539.5px;width:9.4px;height:9.5px;background:#fff;border:1px solid #c4c4c4"></div>
<svg class="a" style="left:783.7px;top:543.3px;" width="5.5" height="3.5" viewBox="0 0 5.5 3.5"><path d="M0 0h5.5l-2.75 3z" fill="#555"/></svg>
<div class="a" style="left:8px;top:569.4px;width:784px;height:10.6px;background:#eeeeee;"></div>
<div class="t" style="left:384.2px;top:571.91px;font-size:7.9px;color:#222;font-weight:400;letter-spacing:-0.2px">Average: 477.9360009</div>
<div class="t" style="left:470.8px;top:571.91px;font-size:7.9px;color:#222;font-weight:400;letter-spacing:-0.2px">Count: 32</div>
<div class="t" style="left:516px;top:571.91px;font-size:7.9px;color:#222;font-weight:400;letter-spacing:-0.2px">Sum: 3345.552006</div>
<div class="a" style="left:591px;top:569.4px;width:24.8px;height:10.6px;background:#d4d4d4;"></div>
<svg class="a" style="left:598.5px;top:570.5px;" width="10" height="8.5" viewBox="0 0 10 8.5"><path d="M.5 .5h9v7.5h-9z M.5 3h9 M.5 5.5h9 M3.5 .5v7.5 M6.5 .5v7.5" fill="none" stroke="#666" stroke-width=".7"/></svg>
<svg class="a" style="left:625px;top:570.5px;" width="9" height="8.5" viewBox="0 0 9 8.5"><path d="M.5 .5h8v7.5h-8z M2 2h5v4.5h-5z" fill="none" stroke="#666" stroke-width=".7"/></svg>
<svg class="a" style="left:650.5px;top:570.5px;" width="9" height="8.5" viewBox="0 0 9 8.5"><path d="M.5 8v-7.5h8v7.5 M.5 4h3v4 M5.5 .5v3.5h3" fill="none" stroke="#666" stroke-width=".7"/></svg>
<div class="a" style="left:671.5px;top:574.5px;width:4px;height:0.9px;background:#666;"></div>
<div class="a" style="left:679px;top:574.5px;width:68.8px;height:0.8px;background:#999;"></div>
<div class="a" style="left:715.2px;top:570.5px;width:3px;height:7.5px;background:#666;"></div>
<div class="a" style="left:749.7px;top:574.5px;width:4.5px;height:0.9px;background:#666;"></div>
<div class="a" style="left:751.5px;top:572.7px;width:0.9px;height:4.5px;background:#666;"></div>
<div class="t" style="left:762.9px;top:571.91px;font-size:7.9px;color:#222;font-weight:400;letter-spacing:-0.2px">130%</div>
<div class="a" style="left:8px;top:8px;width:784px;height:572px;background:rgba(255,255,255,.65);"></div>
<div class="a" style="left:28.5px;top:163.55px;width:156.5px;height:19.9px;background:#4f81bd;"></div>
<div class="a" style="left:185px;top:163.55px;width:417px;height:19.9px;background:#3e6596;"></div>
<div class="t" style="left:32.50px;top:167.68px;width:150px;text-align:center;font-size:13.2px;color:#fff;font-weight:700;">Month</div>
<div class="t" style="left:189.00px;top:167.68px;width:150px;text-align:center;font-size:13.2px;color:#d8dfe8;font-weight:700;">Product</div>
<div class="t" style="left:338.25px;top:167.68px;width:150px;text-align:center;font-size:13.2px;color:#d8dfe8;font-weight:700;">State</div>
<div class="t" style="left:467.75px;top:167.68px;width:150px;text-align:center;font-size:13.2px;color:#d8dfe8;font-weight:700;">Sales $</div>
<div class="a" style="left:28.5px;top:183.45000000000002px;width:573.5px;height:19.9px;background:#b0b9c4;"></div>
<div class="a" style="left:28.5px;top:182.95000000000002px;width:573.5px;height:1px;background:#96a3b5;"></div>
<div class="t" style="left:31.4px;top:191.14px;font-size:12.3px;color:#000;font-weight:400;transform:scaleX(.92);transform-origin:0 0">January</div>
<div class="t" style="left:187px;top:191.14px;font-size:12.3px;color:#000;font-weight:400;transform:scaleX(.92);transform-origin:0 0">Volcano Blend</div>
<div class="t" style="left:343px;top:191.14px;font-size:12.3px;color:#000;font-weight:400;transform:scaleX(.92);transform-origin:0 0">California</div>
<div class="t" style="left:299px;top:191.14px;width:300px;text-align:right;font-size:12.3px;color:#000;font-weight:400;transform:scaleX(.92);transform-origin:100% 0">228.69</div>
<div class="a" style="left:28.5px;top:203.35000000000002px;width:573.5px;height:19.9px;background:#c6c6c6;"></div>
<div class="a" style="left:28.5px;top:202.85000000000002px;width:573.5px;height:1px;background:#96a3b5;"></div>
<div class="t" style="left:31.4px;top:211.04px;font-size:12.3px;color:#000;font-weight:400;transform:scaleX(.92);transform-origin:0 0">January</div>
<div class="t" style="left:187px;top:211.04px;font-size:12.3px;color:#000;font-weight:400;transform:scaleX(.92);transform-origin:0 0">Turkish Delight Roast</div>
<div class="t" style="left:343px;top:211.04px;font-size:12.3px;color:#000;font-weight:400;transform:scaleX(.92);transform-origin:0 0">California</div>
<div class="t" style="left:299px;top:211.04px;width:300px;text-align:right;font-size:12.3px;color:#000;font-weight:400;transform:scaleX(.92);transform-origin:100% 0">325.76</div>
<div class="a" style="left:28.5px;top:223.25px;width:573.5px;height:19.9px;background:#b0b9c4;"></div>
<div class="a" style="left:28.5px;top:222.75px;width:573.5px;height:1px;background:#96a3b5;"></div>
<div class="t" style="left:31.4px;top:230.94px;font-size:12.3px;color:#000;font-weight:400;transform:scaleX(.92);transform-origin:0 0">January</div>
<div class="t" style="left:187px;top:230.94px;font-size:12.3px;color:#000;font-weight:400;transform:scaleX(.92);transform-origin:0 0">Turkish Delight Roast</div>
<div class="t" style="left:343px;top:230.94px;font-size:12.3px;color:#000;font-weight:400;transform:scaleX(.92);transform-origin:0 0">Oregon</div>
<div class="t" style="left:299px;top:230.94px;width:300px;text-align:right;font-size:12.3px;color:#000;font-weight:400;transform:scaleX(.92);transform-origin:100% 0">873.75</div>
<div class="a" style="left:28.5px;top:243.15px;width:573.5px;height:19.9px;background:#c6c6c6;"></div>
<div class="a" style="left:28.5px;top:242.65px;width:573.5px;height:1px;background:#96a3b5;"></div>
<div class="t" style="left:31.4px;top:250.84px;font-size:12.3px;color:#000;font-weight:400;transform:scaleX(.92);transform-origin:0 0">January</div>
<div class="t" style="left:187px;top:250.84px;font-size:12.3px;color:#000;font-weight:400;transform:scaleX(.92);transform-origin:0 0">Breakfast Blastoff</div>
<div class="t" style="left:343px;top:250.84px;font-size:12.3px;color:#000;font-weight:400;transform:scaleX(.92);transform-origin:0 0">Oregon</div>
<div class="t" style="left:299px;top:250.84px;width:300px;text-align:right;font-size:12.3px;color:#000;font-weight:400;transform:scaleX(.92);transform-origin:100% 0">384.77</div>
<div class="a" style="left:28.5px;top:263.05px;width:573.5px;height:19.9px;background:#b0b9c4;"></div>
<div class="a" style="left:28.5px;top:262.55px;width:573.5px;height:1px;background:#96a3b5;"></div>
<div class="t" style="left:31.4px;top:270.74px;font-size:12.3px;color:#000;font-weight:400;transform:scaleX(.92);transform-origin:0 0">January</div>
<div class="t" style="left:187px;top:270.74px;font-size:12.3px;color:#000;font-weight:400;transform:scaleX(.92);transform-origin:0 0">Best Blend of Arabia</div>
<div class="t" style="left:343px;top:270.74px;font-size:12.3px;color:#000;font-weight:400;transform:scaleX(.92);transform-origin:0 0">California</div>
<div class="t" style="left:299px;top:270.74px;width:300px;text-align:right;font-size:12.3px;color:#000;font-weight:400;transform:scaleX(.92);transform-origin:100% 0">273.84</div>
<div class="a" style="left:28.5px;top:282.95px;width:573.5px;height:19.9px;background:#c6c6c6;"></div>
<div class="a" style="left:28.5px;top:282.45px;width:573.5px;height:1px;background:#96a3b5;"></div>
<div class="t" style="left:31.4px;top:290.64px;font-size:12.3px;color:#000;font-weight:400;transform:scaleX(.92);transform-origin:0 0">January</div>
<div class="t" style="left:187px;top:290.64px;font-size:12.3px;color:#000;font-weight:400;transform:scaleX(.92);transform-origin:0 0">Kona Koast</div>
<div class="t" style="left:343px;top:290.64px;font-size:12.3px;color:#000;font-weight:400;transform:scaleX(.92);transform-origin:0 0">California</div>
<div class="t" style="left:299px;top:290.64px;width:300px;text-align:right;font-size:12.3px;color:#000;font-weight:400;transform:scaleX(.92);transform-origin:100% 0">636.25</div>
<div class="a" style="left:28.5px;top:302.85px;width:573.5px;height:19.9px;background:#b0b9c4;"></div>
<div class="a" style="left:28.5px;top:302.35px;width:573.5px;height:1px;background:#96a3b5;"></div>
<div class="t" style="left:31.4px;top:310.54px;font-size:12.3px;color:#000;font-weight:400;transform:scaleX(.92);transform-origin:0 0">January</div>
<div class="t" style="left:187px;top:310.54px;font-size:12.3px;color:#000;font-weight:400;transform:scaleX(.92);transform-origin:0 0">Best Blend of Arabia</div>
<div class="t" style="left:343px;top:310.54px;font-size:12.3px;color:#000;font-weight:400;transform:scaleX(.92);transform-origin:0 0">Oregon</div>
<div class="t" style="left:299px;top:310.54px;width:300px;text-align:right;font-size:12.3px;color:#000;font-weight:400;transform:scaleX(.92);transform-origin:100% 0">622.49</div>
<div class="a" style="left:185px;top:203.35000000000002px;width:1px;height:19.9px;background:#b0b0b0;"></div>
<div class="a" style="left:341px;top:203.35000000000002px;width:1px;height:19.9px;background:#b0b0b0;"></div>
<div class="a" style="left:483.5px;top:203.35000000000002px;width:1px;height:19.9px;background:#b0b0b0;"></div>
<div class="a" style="left:185px;top:243.15px;width:1px;height:19.9px;background:#b0b0b0;"></div>
<div class="a" style="left:341px;top:243.15px;width:1px;height:19.9px;background:#b0b0b0;"></div>
<div class="a" style="left:483.5px;top:243.15px;width:1px;height:19.9px;background:#b0b0b0;"></div>
<div class="a" style="left:185px;top:282.95px;width:1px;height:19.9px;background:#b0b0b0;"></div>
<div class="a" style="left:341px;top:282.95px;width:1px;height:19.9px;background:#b0b0b0;"></div>
<div class="a" style="left:483.5px;top:282.95px;width:1px;height:19.9px;background:#b0b0b0;"></div>
<div class="a" style="left:28px;top:163px;width:575px;height:161px;border:1.4px solid #217346;border-bottom-width:1.4px"></div>
<div class="a" style="left:29.3px;top:164.3px;width:572.4px;height:158.4px;border:1px solid rgba(255,255,255,.55);border-bottom:0"></div>
<div class="a" style="left:599.8px;top:321.3px;width:3.8px;height:3.3px;background:#217346;"></div>
<div class="a" style="left:603.1px;top:164px;width:1px;height:157px;background:#fff;"></div>
<div class="a" style="left:367.5px;top:253.25px;width:187.8px;height:182px;background:#fff;box-shadow:1px 1px 2px rgba(0,0,0,.3),0 0 5px rgba(0,0,0,.15)"></div>
<div class="a" style="left:367.5px;top:404.2px;width:187.8px;height:31.05px;background:#bdc4ce;"></div>
<svg class="a" style="left:370.6px;top:257px;" width="9.4" height="9.5" viewBox="0 0 9.4 9.5"><rect width="9.4" height="9.5" rx="1" fill="#3a9a48"/><path d="M2.5 2.3l4.4 5 M6.9 2.3l-4.4 5" stroke="#fff" stroke-width="1.1"/></svg>
<div class="t" style="left:384.4px;top:257.32px;font-size:8.6px;color:#999;font-weight:400;letter-spacing:-0.35px">Select from Excel</div>
<svg class="a" style="left:542px;top:259px;" width="6.5" height="6.5" viewBox="0 0 6.5 6.5"><path d="M.3 .3l5.9 5.9 M6.2 .3l-5.9 5.9" stroke="#8a8a8a" stroke-width=".8"/></svg>
<div class="t" style="left:384.9px;top:287.21px;font-size:9.2px;color:#2a2a2a;font-weight:700;letter-spacing:-0.15px">Current selection</div>
<div class="t" style="left:385.4px;top:310.14px;font-size:10px;color:#444;font-weight:400;letter-spacing:-0.4px">Worksheet</div>
<div class="a" style="left:381.4px;top:323.3px;width:160.6px;height:17.4px;background:#fff;border:1px solid #8a96a8"></div>
<div class="t" style="left:385.6px;top:328.29px;font-size:8.4px;color:#222;font-weight:400;letter-spacing:-0.2px">Coffee Sales</div>
<div class="t" style="left:385.4px;top:353.69px;font-size:8.4px;color:#333;font-weight:400;letter-spacing:-0.2px">Range</div>
<div class="a" style="left:381.4px;top:365.3px;width:160.6px;height:17.4px;background:#fff;border:1px solid #8a96a8"></div>
<div class="t" style="left:385.6px;top:370.46px;font-size:8.2px;color:#222;font-weight:400;letter-spacing:-0.1px">A1:D8</div>
<svg class="a" style="left:374.8px;top:411px;" width="7" height="7" viewBox="0 0 7 7"><circle cx="3.5" cy="3.5" r="3.2" fill="#fff" stroke="#2f8ad8" stroke-width="1"/><path d="M3.5 3v2.5" stroke="#2f8ad8" stroke-width="1"/><circle cx="3.5" cy="1.9" r=".5" fill="#2f8ad8"/></svg>
<div class="a" style="left:443px;top:412px;width:50px;height:15.5px;background:#e8e9ec;"></div>
<div class="a" style="left:498px;top:412px;width:50px;height:15.5px;background:#e8e9ec;"></div>
<div class="t" style="left:448.00px;top:416.39px;width:40px;text-align:center;font-size:8.4px;color:#222;font-weight:400;">OK</div>
<div class="t" style="left:498.00px;top:416.39px;width:50px;text-align:center;font-size:8.4px;color:#222;font-weight:400;letter-spacing:-0.2px">Cancel</div>
</body></html>
